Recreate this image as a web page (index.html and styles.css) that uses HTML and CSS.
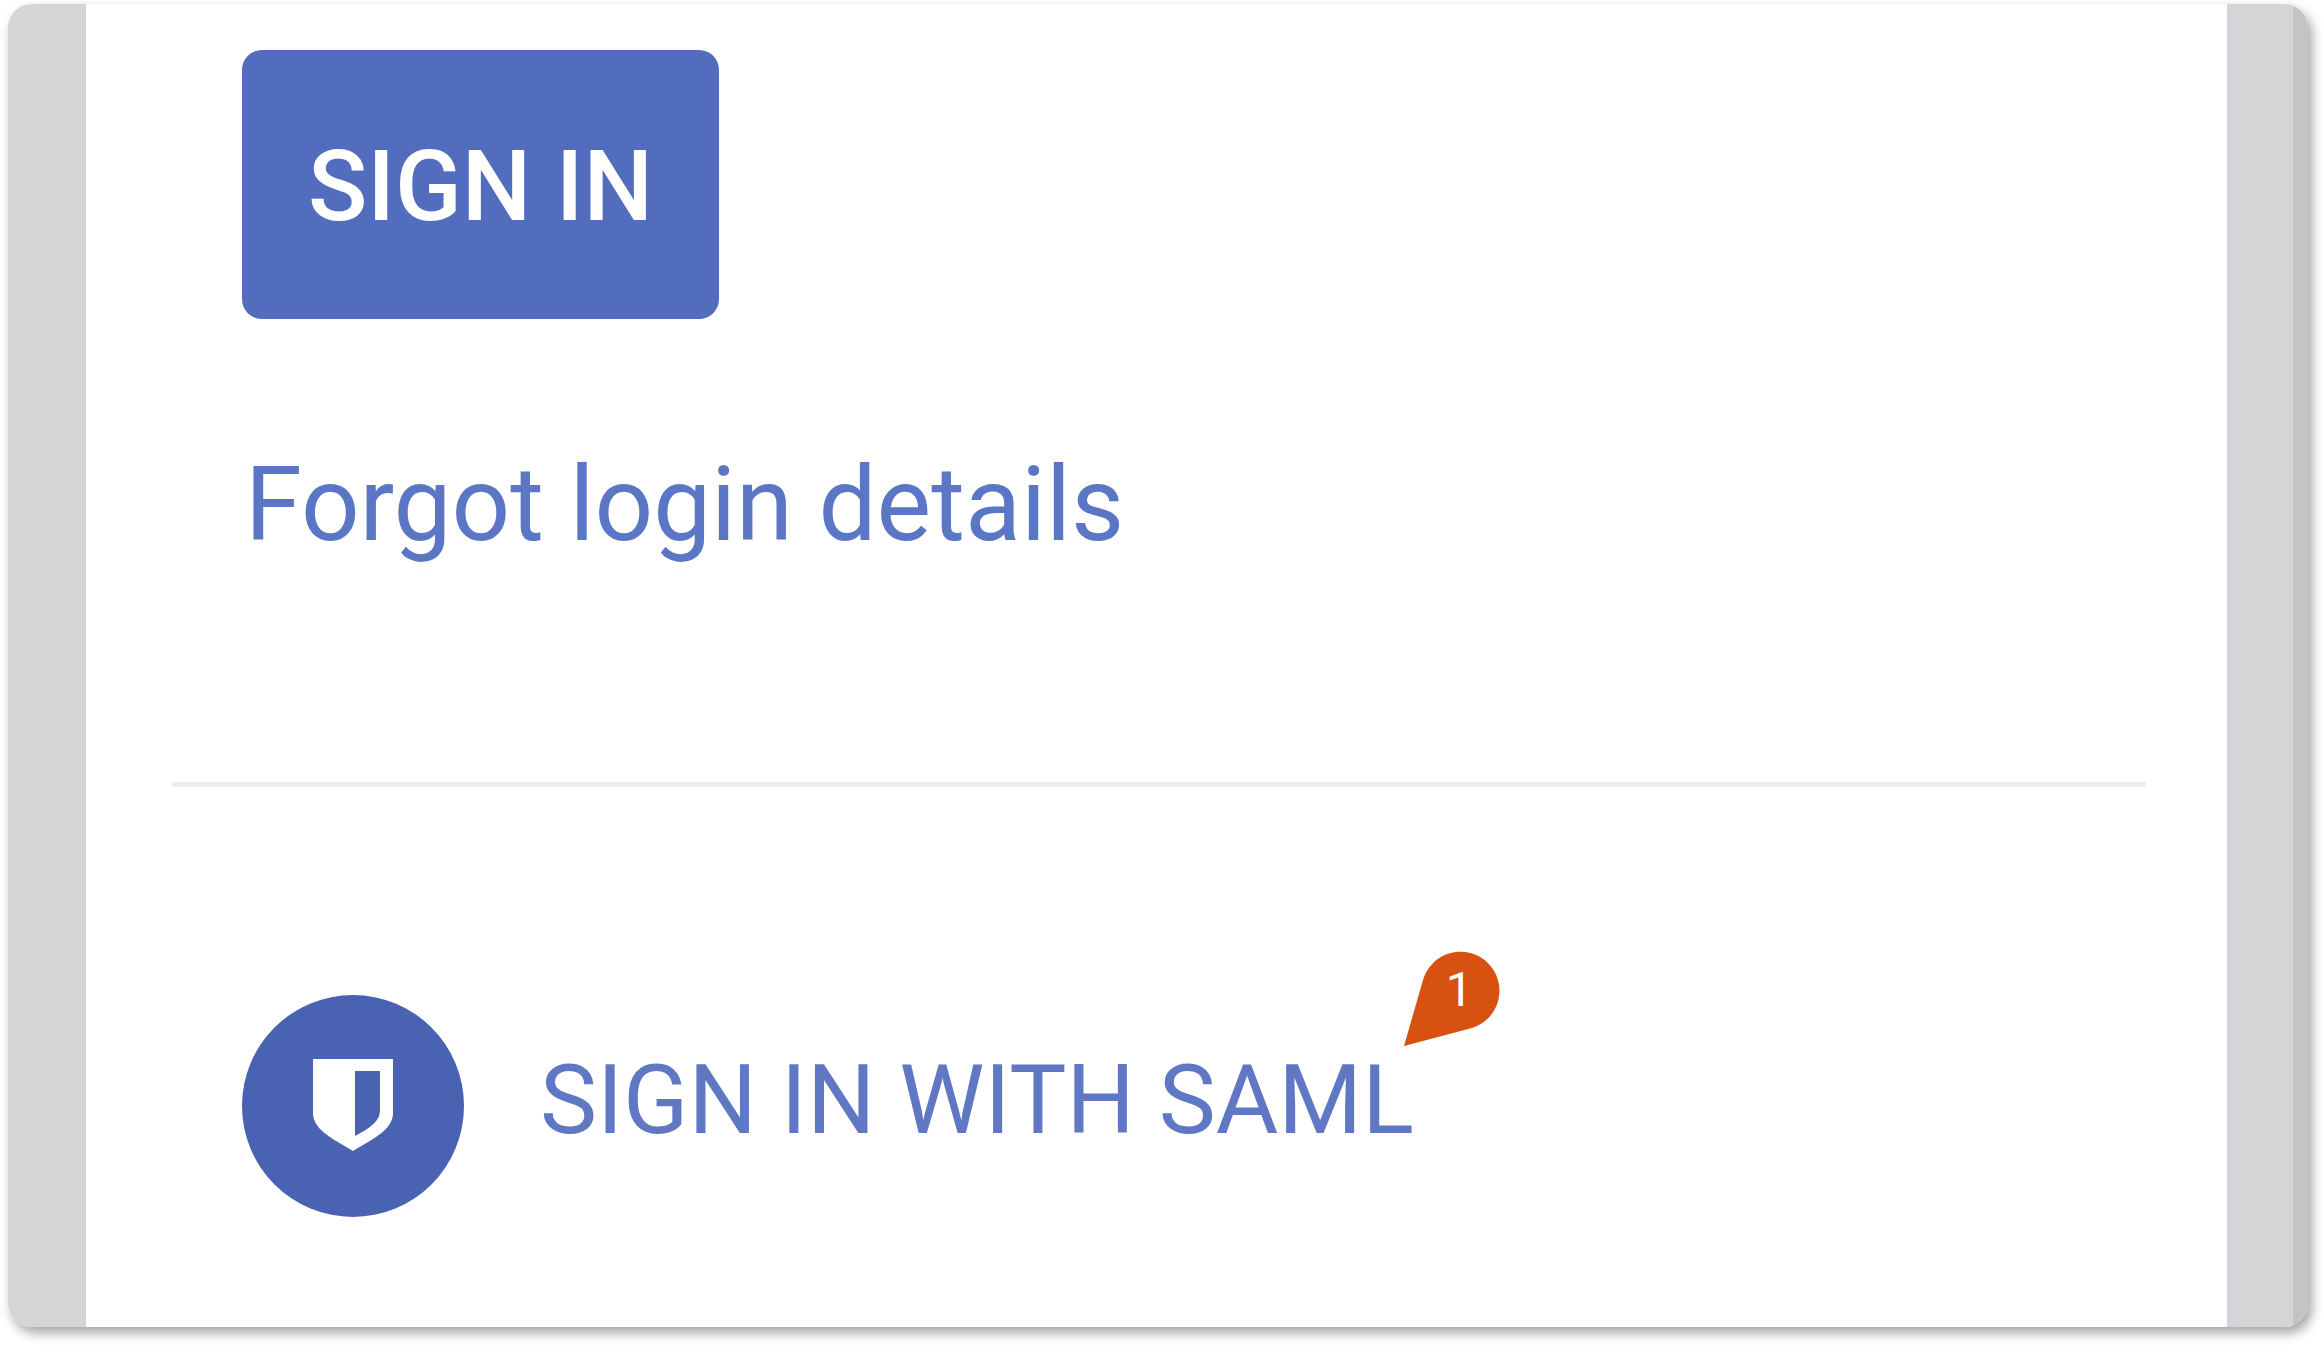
FILE: index.html
```html
<!DOCTYPE html>
<html lang="en">
<head>
<meta charset="utf-8">
<title>Sign in</title>
<link rel="stylesheet" href="styles.css">
</head>
<body>
<div class="frame">
  <main class="panel">
    <div class="account">
      <button class="signin" type="button">SIGN IN</button>
      <a class="forgot" href="#forgot">Forgot login details</a>
    </div>
    <hr class="divider">
    <a class="saml" href="#saml">
      <span class="saml-icon">
        <svg viewBox="0 0 80 98" width="80" height="98" aria-hidden="true">
          <path fill="#fff" fill-rule="evenodd" d="M0 2H80V56C80 72 62 81 40 94C18 81 0 72 0 56ZM42 14V79C57 71 67 64 67 54V14Z"/>
        </svg>
      </span>
      <span class="saml-label">SIGN IN WITH SAML
        <span class="pin">
          <svg class="pin-shape" viewBox="0 0 96 95" width="96" height="95" aria-hidden="true">
            <path fill="#d75210" d="M0 95L19 29A39 39 0 1 1 68 77Z"/>
          </svg>
          <span class="pin-number">1</span>
        </span>
      </span>
    </a>
  </main>
</div>
</body>
</html>
```
FILE: styles.css
```css
* {
  box-sizing: border-box;
}

body {
  margin: 0;
  padding: 4px 16px 20px 8px;
  background: #fff;
  font-family: Roboto, "Liberation Sans", sans-serif;
}

.frame {
  padding: 0 72px 0 70px;
  border-radius: 24px;
  background: linear-gradient(to left, #c4c4c4 15px, #d5d5d5 15px);
  box-shadow: 4px 6px 12px rgba(0, 0, 0, 0.36);
}

.panel {
  display: flex;
  flex-direction: column;
  padding: 46px 81px 110px 86px;
  border: solid #d3d4d9;
  border-width: 0 9px 0 8px;
  background: #fff;
}

.account {
  display: flex;
  flex-direction: column;
  align-items: flex-start;
  gap: 122px;
  padding-left: 70px;
}

.signin {
  padding: 76px 66px 72px;
  border: 0;
  border-radius: 20px;
  background: #526dbd;
  color: #fff;
  font: 500 98px/121px Roboto, "Liberation Sans", sans-serif;
}

.forgot {
  padding-left: 3px;
  color: #5c76c6;
  font-size: 103px;
  line-height: 128px;
  text-decoration: none;
}

.divider {
  width: 100%;
  height: 5px;
  margin: 213px 0 208px;
  border: 0;
  background: #ededed;
}

.saml {
  display: flex;
  align-items: center;
  align-self: flex-start;
  gap: 76px;
  padding-left: 70px;
  color: #6078c4;
  text-decoration: none;
}

.saml-icon {
  display: flex;
  align-items: center;
  justify-content: center;
  width: 222px;
  height: 222px;
  border-radius: 50%;
  background: #4a62b2;
}

.saml-label {
  position: relative;
  padding-bottom: 12px;
  font-size: 96px;
  line-height: 112px;
}

.pin {
  position: absolute;
  right: -86px;
  bottom: 122px;
  width: 96px;
  height: 95px;
  color: #fff;
}

.pin-shape {
  display: block;
  overflow: visible;
}

.pin-number {
  position: absolute;
  top: 11px;
  left: 42px;
  font-size: 48px;
  line-height: 56px;
}
```
